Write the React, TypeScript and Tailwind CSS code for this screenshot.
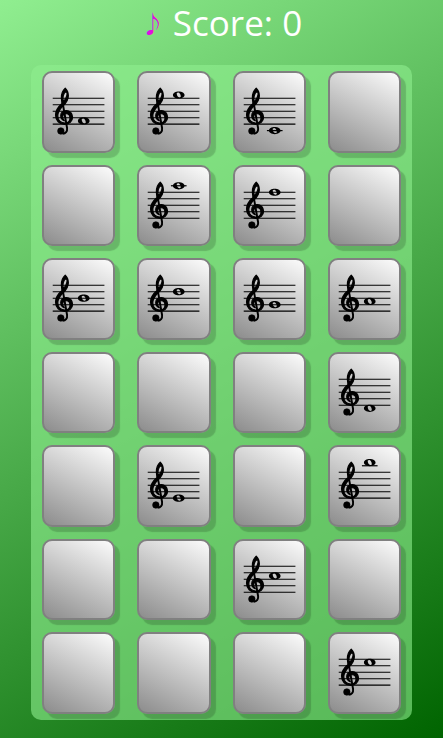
import React, { useState } from 'react';

interface Card {
    id: number;
    // Staff steps below the top line (F5 = 0, E5 = 1, ...), null for a face-down card
    step: number | null;
    label: string;
}

const NOTE_STEPS: Record<string, number> = {
    B5: -3, A5: -2, G5: -1, F5: 0, E5: 1, D5: 2, C5: 3,
    B4: 4, A4: 5, G4: 6, F4: 7, E4: 8, D4: 9, C4: 10,
};

const ROWS: string[][] = [
    ['F4', 'G5', 'C4', ''],
    ['', 'A5', 'F5', ''],
    ['B4', 'D5', 'G4', 'A4'],
    ['', '', '', 'D4'],
    ['', 'E4', '', 'B5'],
    ['', '', 'C5', ''],
    ['', '', '', 'E5'],
];

const cards: Card[] = ROWS.flat().map((note, id) => ({
    id,
    step: note ? NOTE_STEPS[note] : null,
    label: note || 'Hidden card',
}));

const STAFF_TOP = 25;
const LINE_GAP = 6.45;

const TrebleClef: React.FC = () => (
    <g transform={`translate(11.5 ${STAFF_TOP}) scale(0.645)`} stroke="black">
        <path
            fillRule="evenodd"
            strokeWidth="1.8"
            d="M15 -15.5C11 -12 9 -6.5 9 -1C9 2.5 9.5 5 10 8C4 13 0 18.5 0 26C0 34.5 6 40.3 14 40.3C21 40.3 26.3 36 26.3 29.5C26.3 23.5 22 19 16.5 19C11.5 19 8 22.5 8 27C8 31 10.5 33.8 14 35C11.8 33 11 31 11 29C11 26 13.5 24 16.5 24C20 24 22.3 27 22.3 31C22.3 35.5 19 38.3 14.5 38.3C8 38.3 3.5 34 3.5 27.5C3.5 21 7.5 16 12 11.5C16.5 7 19.8 2.5 19.8 -4C19.8 -8.5 18 -12.5 15 -15.5ZM16.5 -10C18 -9 18 -7 17.6 -5C16.8 -1 14.5 3 12 6C11.2 2 11 -1 12 -4C12.8 -7 14.5 -9.5 16.5 -10Z"
        />
        <path d="M10.8 6L17.8 46C18.5 51.5 15.5 54.8 11 54.8" fill="none" strokeWidth="3" />
        <circle cx="8.2" cy="50.6" r="5" />
    </g>
);

const Staff: React.FC<{ step: number }> = ({ step }) => {
    const noteY = STAFF_TOP + (step * LINE_GAP) / 2;
    const ledgerStep = step >= 10 ? 10 : step <= -2 ? -2 : null;

    return (
        <svg viewBox="0 0 69 77" className="block h-full w-full" aria-hidden="true">
            {[0, 1, 2, 3, 4].map(line => (
                <path key={line} d={`M8.7 ${STAFF_TOP + line * LINE_GAP}H60.2`} stroke="black" strokeWidth="1" />
            ))}
            {ledgerStep !== null && (
                <path d={`M31.8 ${STAFF_TOP + (ledgerStep * LINE_GAP) / 2}H47.4`} stroke="black" strokeWidth="1.2" />
            )}
            <TrebleClef />
            <path
                transform={`translate(39.6 ${noteY})`}
                fillRule="evenodd"
                d="M-5.8 0C-5.8 -2.1 -3.2 -3.6 0 -3.6S5.8 -2.1 5.8 0S3.2 3.6 0 3.6S-5.8 2.1 -5.8 0ZM-2 -1.2C-1.9 0.5 -0.8 2.6 0.7 2.5C1.8 2.4 2.1 1.9 2 1.1C1.9 -0.7 0.7 -2.6 -0.7 -2.5C-1.7 -2.4 -2.1 -2 -2 -1.2Z"
            />
        </svg>
    );
};

const App: React.FC = () => {
    const [score] = useState(0);

    return (
        <div className="flex min-h-screen flex-col bg-[linear-gradient(150deg,#90ee90,#006400)] px-[7%] pb-[18px] font-['Open_Sans','Noto_Sans',sans-serif]">
            <header className="flex h-[65px] items-start justify-center gap-2 text-[35px] leading-[46px] text-white">
                <span className="font-['Noto_Sans_CJK_JP',sans-serif] text-2xl leading-[46px] font-bold text-[#e010e0]">♪</span>
                <h1>Score: {score}</h1>
            </header>
            <main className="grid flex-1 auto-rows-fr grid-cols-4 rounded-[10px] bg-[#90ee90]/60">
                {cards.map(card => (
                    <div key={card.id} className="px-[11px] py-1.5">
                        <button
                            type="button"
                            aria-label={card.label}
                            className="block h-full w-full rounded-[10px] border-2 border-[#808080] bg-[linear-gradient(28deg,#8c8c8c,#fcfcfc)] shadow-[5px_5px_1px_rgba(0,0,0,0.17)]"
                        >
                            {card.step !== null && <Staff step={card.step} />}
                        </button>
                    </div>
                ))}
            </main>
        </div>
    );
};

export default App;
